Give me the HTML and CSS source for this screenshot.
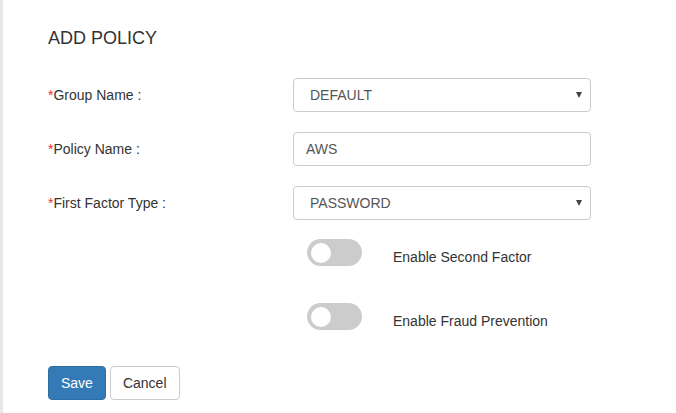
FILE: index.html
```html
<!DOCTYPE html>
<html>
<head>
<meta charset="utf-8">
<link rel="stylesheet" href="styles.css">
</head>
<body>
<div class="page">
  <h2 class="title">ADD POLICY</h2>
  <form class="form">
    <label class="label"><span class="req">*</span>Group Name :</label>
    <div class="select-wrap">
      <div class="control select">DEFAULT</div>
      <span class="caret"></span>
    </div>

    <label class="label"><span class="req">*</span>Policy Name :</label>
    <div class="control input">AWS</div>

    <label class="label"><span class="req">*</span>First Factor Type :</label>
    <div class="select-wrap">
      <div class="control select">PASSWORD</div>
      <span class="caret"></span>
    </div>
  </form>
  <div class="toggles">
    <div class="toggle-row">
      <span class="switch"><span class="knob"></span></span>
      <span class="toggle-text">Enable Second Factor</span>
    </div>
    <div class="toggle-row">
      <span class="switch"><span class="knob"></span></span>
      <span class="toggle-text">Enable Fraud Prevention</span>
    </div>
  </div>
  <div class="actions">
    <button class="btn btn-primary" type="button">Save</button>
    <button class="btn btn-default" type="button">Cancel</button>
  </div>
</div>
</body>
</html>
```

FILE: styles.css
```css
html, body {
  margin: 0;
  padding: 0;
  background: #fff;
}
body {
  font-family: "Liberation Sans", Arial, sans-serif;
  color: #333;
  font-size: 14px;
}
.page {
  border-left: 3px solid #e8e8e8;
  min-height: 413px;
  box-sizing: border-box;
  padding: 27px 0 0 45px;
}
.title {
  margin: 0;
  font-size: 18px;
  line-height: 22px;
  font-weight: normal;
  color: #333;
}
.form {
  margin-top: 29px;
  display: grid;
  grid-template-columns: 245px 298px;
  grid-auto-rows: 34px;
  row-gap: 20px;
  align-items: center;
}
.label {
  font-size: 14px;
  line-height: 20px;
  color: #333;
}
.req {
  color: #e8303a;
}
.select-wrap {
  position: relative;
  height: 34px;
}
.control {
  box-sizing: border-box;
  height: 34px;
  border: 1px solid #ccc;
  border-radius: 4px;
  color: #555;
  font-size: 14px;
  line-height: 32px;
  background: #fff;
}
.select {
  padding-left: 16px;
}
.input {
  padding-left: 12px;
}
.caret {
  position: absolute;
  right: 9px;
  top: 14px;
  width: 0;
  height: 0;
  border-left: 3px solid transparent;
  border-right: 3px solid transparent;
  border-top: 6px solid #444;
}
.toggles {
  margin-top: 19px;
  padding-left: 259px;
  display: flex;
  flex-direction: column;
  gap: 37px;
}
.toggle-row {
  display: flex;
  align-items: center;
  height: 27px;
}
.switch {
  box-sizing: border-box;
  width: 55px;
  height: 27px;
  border-radius: 14px;
  background: #ccc;
  padding: 4px;
  display: flex;
  align-items: center;
}
.knob {
  width: 20px;
  height: 20px;
  border-radius: 50%;
  background: #fff;
}
.toggle-text {
  margin-left: 31px;
  padding-top: 8px;
  color: #333;
  font-size: 14px;
}
.actions {
  margin-top: 36px;
  display: flex;
  gap: 4px;
}
.btn {
  font-family: "Liberation Sans", Arial, sans-serif;
  font-size: 14px;
  line-height: 20px;
  padding: 6px 12px;
  border-radius: 4px;
  border: 1px solid transparent;
  height: 34px;
  box-sizing: border-box;
  cursor: pointer;
}
.btn-primary {
  background: #337ab7;
  border-color: #2e6da4;
  color: #fff;
}
.btn-default {
  background: #fff;
  border-color: #ccc;
  color: #333;
}
```
